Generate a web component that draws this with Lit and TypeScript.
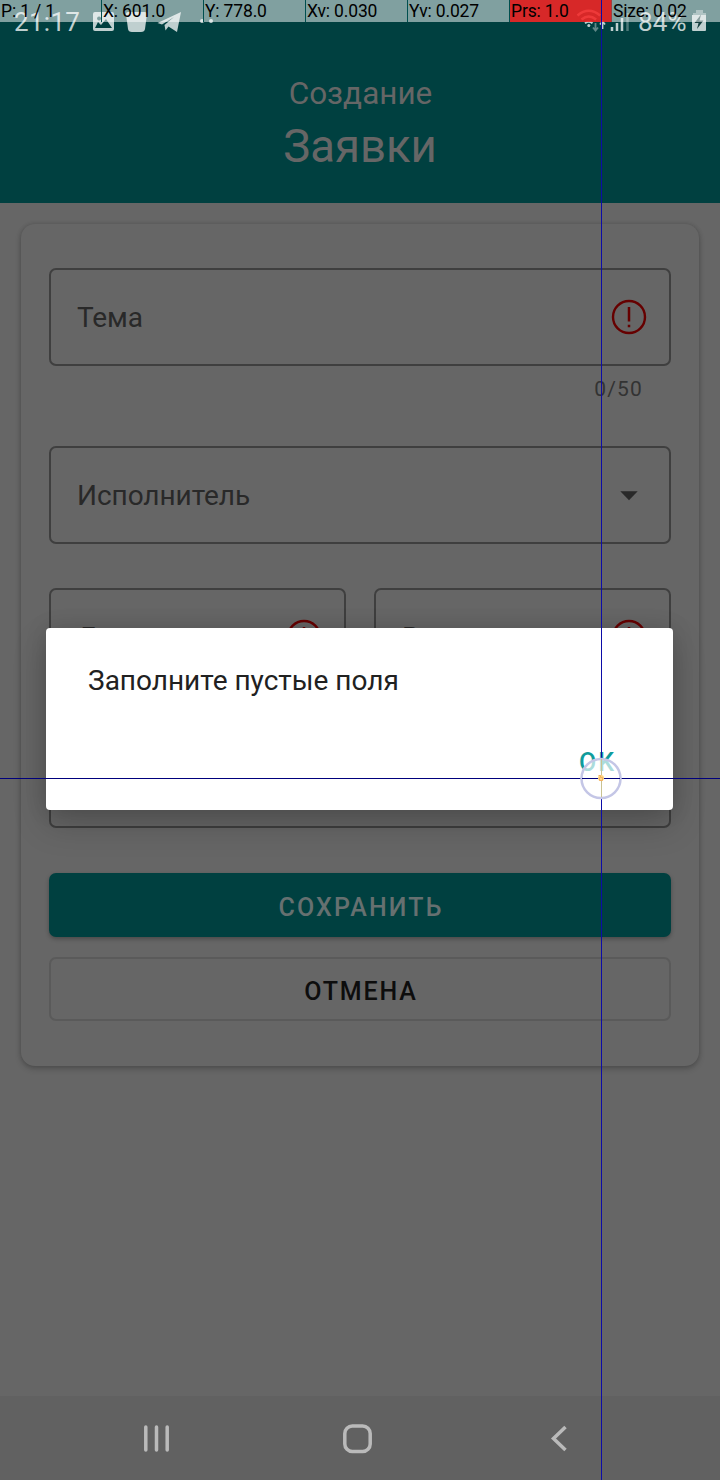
import { LitElement, html, css, nothing } from "lit";
import { customElement, property } from "lit/decorators.js";

@customElement("form-field")
class FormField extends LitElement {
  @property() label = "";
  @property() icon = "";

  static styles = css`
    :host { display: block; flex: 1; min-width: 0; }
    .box {
      box-sizing: border-box; height: 98px; border: 2px solid #3f3f3f; border-radius: 7px;
      display: flex; align-items: center; justify-content: space-between;
      padding: 0 22px 0 26px; font-size: 28px; color: #292929;
    }
    .label { line-height: 34px; padding-top: 2px; letter-spacing: -.05px; }
    svg { display: block; width: 36px; height: 36px; }
  `;

  render() {
    return html`<div class="box">
      <span class="label">${this.label}</span>
      ${this.icon === "error"
        ? html`<svg viewBox="0 0 36 36"><circle cx="18" cy="18" r="16" fill="none" stroke="#660000" stroke-width="2.400"/><path d="M18 8v14.500M18 25.800v2.400" stroke="#660000" stroke-width="2.500" fill="none"/></svg>`
        : nothing}
      ${this.icon === "menu"
        ? html`<svg viewBox="0 0 36 36"><path d="M9.300 14.200H26.700L18 23.200Z" fill="#292929"/></svg>`
        : nothing}
    </div>`;
  }
}

const cells = ["P: 1 / 1", "X: 601.0", "Y: 778.0", "Xv: 0.030", "Yv: 0.027", "Prs: 1.0", "Size: 0.02"];

@customElement("app-root")
class AppRoot extends LitElement {
  static styles = css`
    :host { display: block; position: relative; width: 720px; height: 1480px; overflow: hidden; font-family: Roboto, sans-serif; background: #666; }
    .screen { display: flex; flex-direction: column; height: 1480px; }
    .header { height: 203px; flex: none; background: #004040; color: #666; text-align: center; }
    .status { height: 43px; display: flex; justify-content: space-between; font-size: 26px; color: rgba(255,255,255,.75); }
    .status svg { display: block; width: 130px; height: 43px; }
    .left, .right { display: flex; }
    .clock { margin-left: 14px; width: 76px; line-height: 45px; text-align: left; letter-spacing: .3px; white-space: nowrap; }
    .right .signals { width: 57px; margin-right: 7px; }
    .percent { width: 52px; line-height: 45px; text-align: left; letter-spacing: .1px; }
    .right .battery { width: 30px; }
    .over { margin-top: 32px; padding-left: 1px; font-size: 31.5px; line-height: 38px; }
    .title { margin-top: 7px; font-size: 45.5px; line-height: 54px; }
    .content { flex: 1; padding: 21px 21px 0; }
    .card {
      box-sizing: border-box; height: 842px; border-radius: 14px; background: #666; padding: 44px 28px;
      box-shadow: 0 3px 6px rgba(0,0,0,.2), 0 0 4px rgba(0,0,0,.15);
    }
    .counter { height: 80px; box-sizing: border-box; padding: 10px 28px 0; text-align: right; font-size: 21px; line-height: 26px; letter-spacing: 1.2px; color: #333; }
    .pair { display: flex; gap: 28px; margin: 44px 0; }
    .btn { box-sizing: border-box; height: 64px; border-radius: 7px; display: flex; align-items: center; justify-content: center; font-size: 25px; font-weight: 500; letter-spacing: 2.15px; padding: 4px 0 0 2px; }
    .save { margin-top: 45px; background: #004040; color: #667070; box-shadow: 0 2px 4px rgba(0,0,0,.28); }
    .cancel { margin-top: 20px; border: 2px solid #5a5a5a; color: #0d0d0d; letter-spacing: 1.85px; }
    .nav { height: 84px; flex: none; background: #616161; }
    .nav svg { display: block; }
    .dialog {
      position: absolute; left: 46px; top: 628px; width: 627px; height: 182px; box-sizing: border-box;
      padding: 36px 57px 0 42px; border-radius: 4px; background: #fff;
      box-shadow: 0 14px 34px rgba(0,0,0,.2), 0 0 22px rgba(0,0,0,.12);
    }
    .message { font-size: 28px; line-height: 34px; color: #212121; }
    .ok { margin-top: 50px; text-align: right; font-size: 25px; font-weight: 500; line-height: 30px; letter-spacing: 2px; color: #109c9c; }
    .debug { position: absolute; left: 0; top: 0; width: 720px; height: 22px; display: flex; }
    .cell { box-sizing: border-box; flex: 0 0 102px; height: 22px; padding-left: 1px; background: rgba(255,255,255,.5); border-right: 1px solid #004f4f; font-size: 17.5px; letter-spacing: -.16px; line-height: 22px; color: #000; white-space: nowrap; background-clip: padding-box; }
    .cell:last-child { flex: 1; border: 0; }
    .pressure { background: rgba(245,36,36,.88); border-right-color: #a04040; }
    .pointer { position: absolute; left: 0; top: 0; }
  `;

  render() {
    return html`
      <div class="screen">
        <header class="header">
          <div class="status">
            <div class="left">
              <span class="clock">21:17</span>
              <svg viewBox="90 0 130 43" fill="currentColor">
                <path fill-rule="evenodd" d="M95 12h17q2 0 2 2v15q0 2-2 2H95q-2 0-2-2V14q0-2 2-2ZM95 28h17l-6-9-5 6-3-3ZM99 16.500a2 2 0 1 0 .1 0Z"/>
                <path d="M126 14q0-2 2-2h17q2 0 2 2l-2 15q-.4 3-4 3h-9q-3.600 0-4-3Z"/>
                <path d="M157.500 23 181 12 177 32 168.500 26.500 165.500 30.500 164.500 25 174 17 162 24.500Z"/>
                <circle cx="202" cy="21" r="2"/><circle cx="211" cy="21" r="2"/>
              </svg>
            </div>
            <div class="right">
              <svg class="signals" viewBox="574 0 57 43" fill="none" stroke="currentColor">
                <path d="M577.500 15.500q11.300-9.500 22.600 0M581.500 19.500q7.300-6 14.600 0" stroke-width="2.400"/>
                <path d="M585 23.300q3.800-3 7.500 0" stroke-width="2"/>
                <circle cx="588.800" cy="25.500" r="1.500" fill="currentColor" stroke="none"/>
                <path d="M595.500 23v7m-2.500-2.500 2.500 3 2.500-3" stroke-width="1.800" opacity=".5"/>
                <path d="M602.500 29v-7m-2.500 2.500 2.500-3 2.500 3" stroke-width="1.800"/>
                <path d="M612 31v-4M617 31v-8M622 31V18" stroke-width="2.500"/>
                <path d="M627.500 31V13" stroke-width="2.500" opacity=".4"/>
              </svg>
              <span class="percent">84%</span>
              <svg class="battery" viewBox="690 0 30 43">
                <path fill="currentColor" opacity=".5" d="M696 10h7v3h3v2h-13v-2h3Z"/>
                <path fill="currentColor" d="M692 15h14v15q0 1-1 1h-12q-1 0-1-1V15Z"/>
                <path fill="#173f3f" d="M701 14.500 694.500 23h4l-1.500 6 6.500-8.500h-4Z"/>
              </svg>
            </div>
          </div>
          <div class="over">Создание</div>
          <div class="title">Заявки</div>
        </header>
        <main class="content">
          <div class="card">
            <form-field label="Тема" icon="error"></form-field>
            <div class="counter">0/50</div>
            <form-field label="Исполнитель" icon="menu"></form-field>
            <div class="pair">
              <form-field label="Дата" icon="error"></form-field>
              <form-field label="Время" icon="error"></form-field>
            </div>
            <form-field></form-field>
            <div class="btn save">СОХРАНИТЬ</div>
            <div class="btn cancel">ОТМЕНА</div>
          </div>
        </main>
        <nav class="nav">
          <svg width="720" height="84" viewBox="0 1396 720 84" fill="none" stroke="#bababa" stroke-width="3.500" stroke-linecap="round">
            <path d="M145.800 1427v23M156.500 1427v23M167.200 1427v23"/>
            <rect x="344.800" y="1426" width="25.400" height="25.400" rx="7.500"/>
            <path d="M565.500 1427 553.500 1438.500 565.500 1450" stroke-linecap="butt"/>
          </svg>
        </nav>
      </div>
      <div class="dialog">
        <div class="message">Заполните пустые поля</div>
        <div class="ok">OK</div>
      </div>
      <div class="debug">
        ${cells.map((c, i) => html`<div class="cell ${i === 5 ? "pressure" : ""}">${c}</div>`)}
      </div>
      <svg class="pointer" width="720" height="1480" viewBox="0 0 720 1480" fill="none">
        <rect x="601" y="0" width="1" height="1480" fill="#0c0ca8"/>
        <rect x="0" y="778" width="720" height="1" fill="#00007c"/>
        <circle cx="601" cy="778.500" r="19.500" fill="#fff" fill-opacity=".65" stroke="#c4c6e6" stroke-width="2.500"/>
        <rect x="582" y="778" width="38" height="1" fill="#00007c"/>
        <rect x="601" y="759" width="1" height="38" fill="#c9c291"/>
        <circle cx="601" cy="778" r="3" fill="#ffd782"/>
        <path d="M598.500 775.500h2v2h2v3h-3v-3" stroke="#f5b060"/>
      </svg>
    `;
  }
}
